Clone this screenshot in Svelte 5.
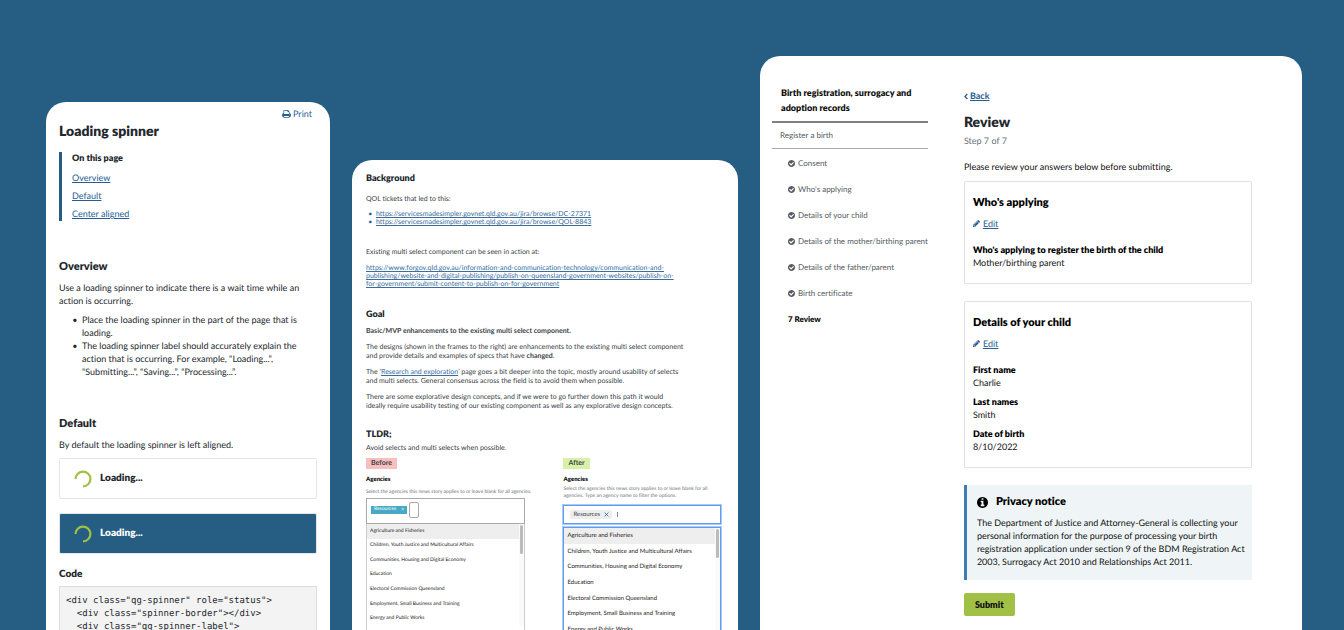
<script>
  const agencies = [
    'Agriculture and Fisheries',
    'Children, Youth Justice and Multicultural Affairs',
    'Communities, Housing and Digital Economy',
    'Education',
    'Electoral Commission Queensland',
    'Employment, Small Business and Training',
    'Energy and Public Works'
  ];

  const steps = [
    'Consent',
    "Who's applying",
    'Details of your child',
    'Details of the mother/birthing parent',
    'Details of the father/parent',
    'Birth certificate'
  ];

  const answers = [
    {
      title: "Who's applying",
      rows: [["Who's applying to register the birth of the child", 'Mother/birthing parent']]
    },
    {
      title: 'Details of your child',
      rows: [
        ['First name', 'Charlie'],
        ['Last names', 'Smith'],
        ['Date of birth', '8/10/2022']
      ]
    }
  ];

  const code = `<div class="qg-spinner" role="status">
  <div class="spinner-border"></div>
  <div class="qg-spinner-label">`;
</script>

{#snippet spinner()}
  <svg class="spinner" viewBox="0 0 18 18" aria-hidden="true">
    <path d="M1.6 9A7.4 7.4 0 1 1 9 16.4" fill="none" stroke="#a1c046" stroke-width="2.2" />
  </svg>
{/snippet}

<div class="page">
  <article class="panel guide">
    <a class="print" href="#print">
      <svg viewBox="0 128 1664 1536" aria-hidden="true"><path d="M384 1536h896v-256h-896v256zM384 896h896v-384h-160q-40 0-68-28t-28-68v-160h-640v640zM1536 960q0-26-19-45t-45-19-45 19-19 45 19 45 45 19 45-19 19-45zM1664 960v416q0 13-9.500 22.500t-22.500 9.500h-224v160q0 40-28 68t-68 28h-960q-40 0-68-28t-28-68v-160h-224q-13 0-22.500-9.500t-9.500-22.500v-416q0-79 56.500-135.500t135.500-56.500h64v-544q0-40 28-68t68-28h672q40 0 88 20t76 48l152 152q28 28 48 76t20 88v256h64q79 0 135.500 56.500t56.500 135.500z" /></svg>
      Print
    </a>
    <h1>Loading spinner</h1>
    <nav class="toc">
      <h2>On this page</h2>
      <a href="#overview">Overview</a>
      <a href="#default">Default</a>
      <a href="#center">Center aligned</a>
    </nav>
    <h2 id="overview">Overview</h2>
    <p>Use a loading spinner to indicate there is a wait time while an action is occurring.</p>
    <ul>
      <li>Place the loading spinner in the part of the page that is loading.</li>
      <li>The loading spinner label should accurately explain the action that is occurring. For example, “Loading...”, “Submitting...”, “Saving...”, “Processing...”.</li>
    </ul>
    <h2 id="default">Default</h2>
    <p>By default the loading spinner is left aligned.</p>
    <div class="demo" role="status">{@render spinner()}Loading...</div>
    <div class="demo dark" role="status">{@render spinner()}Loading...</div>
    <h3>Code</h3>
    <pre>{code}</pre>
  </article>

  <article class="panel brief">
    <h2>Background</h2>
    <p class="intro">QOL tickets that led to this:</p>
    <ul class="tickets">
      <li><a href="#dc">https://servicesmadesimpler.govnet.qld.gov.au/jira/browse/DC-27371</a></li>
      <li><a href="#qol">https://servicesmadesimpler.govnet.qld.gov.au/jira/browse/QOL-8843</a></li>
    </ul>
    <p class="existing">Existing multi select component can be seen in action at:</p>
    <p class="long-link"><a href="#forgov">https://www.forgov.qld.gov.au/information-and-communication-technology/communication-and-publishing/website-and-digital-publishing/publish-on-queensland-government-websites/publish-on-for-government/submit-content-to-publish-on-for-government</a></p>
    <h2 class="goal">Goal</h2>
    <p><strong>Basic/MVP enhancements to the existing multi select component.</strong></p>
    <p>The designs (shown in the frames to the right) are enhancements to the existing multi select component<br />and provide details and examples of specs that have <strong>changed</strong>.</p>
    <p>The ‘<a href="#research">Research and exploration</a>’ page goes a bit deeper into the topic, mostly around usability of selects and multi selects. General consensus across the field is to avoid them when possible.</p>
    <p>There are some explorative design concepts, and if we were to go further down this path it would<br />ideally require usability testing of our existing component as well as any explorative design concepts.</p>
    <h2 class="tldr">TLDR;</h2>
    <p class="avoid">Avoid selects and multi selects when possible.</p>

    <div class="compare">
      <section class="before">
        <span class="badge">Before</span>
        <label for="agency-before">Agencies</label>
        <p class="hint">Select the agencies this news story applies to or leave blank for all agencies.</p>
        <div class="field">
          <span class="chip">Resources <button aria-label="Remove Resources">×</button></span>
          <input id="agency-before" type="text" />
        </div>
        <div class="dropdown">
          <ul>
            {#each agencies as agency, i}
              <li class:active={i === 0}>{agency}</li>
            {/each}
          </ul>
          <div class="track"><div class="thumb"></div></div>
        </div>
      </section>
      <section class="after">
        <span class="badge">After</span>
        <label for="agency-after">Agencies</label>
        <p class="hint">Select the agencies this news story applies to or leave blank for all agencies. Type an agency name to filter the options.</p>
        <div class="field">
          <span class="chip">Resources
            <button aria-label="Remove Resources"><svg viewBox="0 0 8 8"><path d="M1 1l6 6M7 1L1 7" fill="none" stroke="#2d6594" stroke-width="1.300" /></svg></button>
          </span>
          <i class="caret"></i>
          <input id="agency-after" type="text" />
        </div>
        <div class="dropdown">
          <ul>
            {#each agencies as agency, i}
              <li class:active={i === 0}>{agency}</li>
            {/each}
          </ul>
          <div class="track"><div class="thumb"></div></div>
        </div>
      </section>
    </div>
  </article>

  <article class="panel form">
    <nav class="steps">
      <h2>Birth registration, surrogacy and adoption records</h2>
      <a class="group" href="#register">Register a birth</a>
      <ol>
        {#each steps as step}
          <li>
            <svg viewBox="0 128 1536 1536" aria-hidden="true"><path d="M1284 734q0-28-18-46l-91-90q-19-19-45-19t-45 19l-408 407-226-226q-19-19-45-19t-45 19l-91 90q-18 18-18 46 0 27 18 45l362 362q19 19 45 19 27 0 46-19l543-543q18-18 18-45zm252 162q0 209-103 385.500t-279.500 279.500-385.500 103-385.500-103-279.500-279.500-103-385.500 103-385.500 279.500-279.500 385.500-103 385.500 103 279.500 279.500 103 385.500z" /></svg>
            {step}
          </li>
        {/each}
        <li class="current">7 Review</li>
      </ol>
    </nav>
    <main>
      <a class="back" href="#back">
        <svg viewBox="0 0 6 10" aria-hidden="true"><path d="M5 1L1.500 5L5 9" fill="none" stroke="currentColor" stroke-width="2" /></svg><span>Back</span>
      </a>
      <h1>Review</h1>
      <p class="count">Step 7 of 7</p>
      <p class="lead">Please review your answers below before submitting.</p>
      {#each answers as section}
        <section class="card">
          <h2>{section.title}</h2>
          <a class="edit" href="#edit">
            <svg viewBox="0 128 1536 1536" aria-hidden="true"><path d="M363 1536l91-91-235-235-91 91v107h128v128h107zM886 608q0-22-22-22-10 0-17 7l-542 542q-7 7-7 17 0 22 22 22 10 0 17-7l542-542q7-7 7-17zM832 416l416 416-832 832h-416v-416zM1515 512q0 53-37 90l-166 166-416-416 166-165q36-38 90-38 53 0 91 38l235 234q37 39 37 91z" /></svg><span>Edit</span>
          </a>
          <dl>
            {#each section.rows as [term, value]}
              <div><dt>{term}</dt><dd>{value}</dd></div>
            {/each}
          </dl>
        </section>
      {/each}
      <aside>
        <h2>
          <svg viewBox="0 128 1536 1536" aria-hidden="true"><path d="M1024 1376v-160q0-14-9-23t-23-9h-96v-512q0-14-9-23t-23-9h-320q-14 0-23 9t-9 23v160q0 14 9 23t23 9h96v320h-96q-14 0-23 9t-9 23v160q0 14 9 23t23 9h448q14 0 23-9t9-23zm-128-896v-160q0-14-9-23t-23-9h-192q-14 0-23 9t-9 23v160q0 14 9 23t23 9h192q14 0 23-9t9-23zm640 416q0 209-103 385.500t-279.500 279.500-385.500 103-385.500-103-279.500-279.500-103-385.500 103-385.500 279.500-279.500 385.500-103 385.500 103 279.500 279.500 103 385.500z" /></svg>
          Privacy notice
        </h2>
        <p>The Department of Justice and Attorney-General is collecting your personal information for the purpose of processing your birth registration application under section 9 of the BDM Registration Act 2003, Surrogacy Act 2010 and Relationships Act 2011.</p>
      </aside>
      <button class="submit" type="submit">Submit</button>
    </main>
  </article>
</div>

<style>
  :global(body) {
    margin: 0;
    background: #265d83;
  }
  .page {
    display: grid;
    grid-template-columns: 284fr 386fr 542fr;
    gap: 22px;
    height: 100vh;
    padding: 0 42px 0 46px;
    box-sizing: border-box;
    overflow: hidden;
    background: #265d83;
    font-family: Lato, 'Liberation Sans', sans-serif;
    font-size: 9px;
    line-height: 13px;
    color: #23282d;
    font-variant-ligatures: none;
    text-rendering: geometricPrecision;
  }
  .page :where(h1, h2, h3, p, ul, ol, dl, dd, pre) {
    margin: 0;
    padding: 0;
  }
  .page :where(h1, h2, h3) {
    font-weight: 800;
  }
  .steps ol,
  .dropdown ul {
    list-style: none;
  }
  .page :where(a) {
    color: #265d94;
    text-underline-offset: 1px;
  }
  .page svg {
    display: block;
    flex: none;
    fill: currentColor;
  }
  .panel {
    box-sizing: border-box;
    min-width: 0;
    min-height: 100vh;
    border-radius: 20px 20px 0 0;
    background: #fff;
  }

  .guide {
    margin-top: 102px;
    padding: 6px 13px 0;
  }
  .print {
    display: flex;
    align-items: center;
    justify-content: flex-end;
    gap: 2px;
    padding-right: 5px;
    line-height: 12px;
    text-decoration: none;
  }
  .print svg {
    width: 9px;
    height: 8px;
  }
  .guide h1 {
    margin-top: 2px;
    font-size: 14px;
    line-height: 18px;
  }
  .toc {
    display: flex;
    flex-direction: column;
    align-items: flex-start;
    gap: 6px;
    margin-top: 12px;
    padding: 0 0 1px 10px;
    border-left: 3px solid #265d83;
    line-height: 12px;
  }
  .guide .toc h2 {
    margin: 0 0 2px;
    font-size: 9px;
    line-height: 12px;
  }
  .guide h2 {
    margin-top: 37px;
    font-size: 11px;
    line-height: 18px;
  }
  .guide p {
    margin-top: 5px;
  }
  .guide ul {
    margin-top: 6px;
    padding-left: 23px;
    list-style-type: '•  ';
  }
  .demo {
    display: flex;
    align-items: center;
    gap: 8px;
    height: 41px;
    margin-top: 7px;
    padding: 0 14px;
    box-sizing: border-box;
    border: 1px solid #e3e5e7;
    border-radius: 2px;
    font-size: 10px;
    font-weight: 800;
  }
  .demo.dark {
    margin-top: 14px;
    background: #265d83;
    color: #fff;
  }
  .spinner {
    width: 18px;
    height: 18px;
  }
  .guide h3 {
    margin-top: 14px;
    font-size: 10px;
    line-height: 12px;
  }
  .guide pre {
    margin-top: 6px;
    padding: 8px 6px 40px;
    border: 1px solid #dcdcdc;
    background: #f3f3f3;
    font-family: 'DejaVu Sans Mono', monospace;
    font-size: 9px;
  }

  .brief {
    margin-top: 160px;
    padding: 12px 14px 0;
    font-size: 7px;
    line-height: 9px;
    color: #3b4147;
  }
  .brief :where(a) {
    color: #3a6c9d;
  }
  .brief h2 {
    font-size: 9px;
    line-height: 12px;
    color: #23282d;
  }
  .brief > p {
    max-width: 318px;
    margin-top: 7px;
    white-space: nowrap;
  }
  .brief > p:has(a) {
    white-space: normal;
  }
  .brief > .intro {
    margin-top: 11px;
    line-height: 8px;
  }
  .tickets {
    margin-top: 7px;
    padding-left: 10px;
    line-height: 8px;
    color: #265d94;
    list-style-type: '•  ';
  }
  .brief > .existing {
    margin-top: 22px;
    line-height: 8px;
  }
  .brief > .long-link {
    margin-top: 8px;
    line-height: 8px;
  }
  .brief .goal {
    margin-top: 20px;
  }
  .brief .tldr {
    margin-top: 17px;
  }
  .brief > .avoid {
    margin-top: 4px;
  }
  .compare {
    display: grid;
    grid-template-columns: 160fr 158fr;
    gap: 38px;
    margin: 5px 3px 0 0;
    font-size: 6px;
  }
  .compare > section {
    min-width: 0;
  }
  .badge {
    display: block;
    width: fit-content;
    padding: 1px 5px;
    font-size: 7px;
    font-weight: 700;
  }
  .before .badge {
    background: #f7bfbf;
  }
  .after .badge {
    background: #d9f0a8;
  }
  .compare label {
    display: block;
    margin-top: 6px;
    font-weight: 800;
    color: #111;
  }
  .hint {
    font-size: 5px;
    line-height: 7px;
    color: #6b7177;
  }
  .field {
    display: flex;
    align-items: center;
    box-sizing: border-box;
    padding: 0 6px;
    background: #fff;
  }
  .chip {
    display: flex;
    align-items: center;
  }
  .chip button {
    padding: 0;
    border: 0;
    background: none;
    color: inherit;
    font: inherit;
  }
  .field input {
    min-width: 0;
    box-sizing: border-box;
    padding: 0;
    background: none;
    font: inherit;
    outline: 0;
  }
  .dropdown {
    display: flex;
    align-items: flex-start;
  }
  .dropdown ul {
    display: grid;
    flex: 1;
    grid-auto-rows: 1fr;
  }
  .dropdown li {
    display: flex;
    align-items: center;
    padding-left: 3px;
    color: #222;
  }
  .dropdown .active {
    background: #eee;
  }
  .track {
    align-self: stretch;
    width: 5px;
    background: #fafafa;
  }
  .thumb {
    width: 3px;
    height: 29px;
    margin: 1px;
    border-radius: 2px;
    background: #bbb;
  }
  .before .hint {
    padding-top: 5px;
    white-space: nowrap;
  }
  .before .field {
    height: 26px;
    margin-top: 2px;
    padding: 0 4px 3px;
    gap: 2px;
    border: 1px solid #aaa;
  }
  .before .chip {
    gap: 5px;
    height: 8px;
    padding: 0 3px;
    background: #48a9c5;
    color: #fff;
    font-size: 5px;
  }
  .before input {
    width: 10px;
    height: 16px;
    border: 1px solid #aaa;
    border-radius: 2px;
  }
  .before .dropdown {
    padding-bottom: 40px;
    border: 1px solid #ccc;
    border-top: 0;
    font-size: 5px;
  }
  .before .dropdown ul {
    height: 102px;
  }
  .after .hint {
    padding-top: 2px;
  }
  .after .field {
    height: 19px;
    margin-top: 5px;
    border: 1px solid #5f9bee;
    box-shadow: 0 0 0 1px #a9cbf8;
  }
  .after .chip {
    gap: 4px;
    height: 9px;
    padding: 0 3px;
    border-radius: 2px;
    background: #eee;
  }
  .after .chip svg {
    width: 5px;
    height: 5px;
  }
  .caret {
    width: 1px;
    height: 5px;
    margin-left: 5px;
    background: #888;
  }
  .after input {
    flex: 1;
    border: 0;
  }
  .after .dropdown {
    margin-top: 3px;
    padding-bottom: 40px;
    border: 1px solid #5f9bee;
    box-shadow: 0 0 0 1px #a9cbf8;
  }
  .after .dropdown ul {
    height: 109px;
  }

  .form {
    display: grid;
    grid-template-columns: 155fr 288fr;
    align-items: start;
    gap: 36px;
    margin-top: 56px;
    padding: 0 50px 0 12px;
  }
  .steps {
    font-size: 8px;
    color: #555b61;
  }
  .steps h2 {
    padding: 29px 8px 6px 9px;
    border-bottom: 2px solid #7d8184;
    font-size: 9px;
    line-height: 15px;
    color: #111;
  }
  .group {
    display: block;
    padding: 6px 8px;
    border-bottom: 1px solid #aaa;
    color: #555b61;
    text-decoration: none;
  }
  .steps ol {
    padding: 1px 0 0 16px;
  }
  .steps li {
    display: flex;
    align-items: center;
    gap: 3px;
    height: 26px;
    white-space: nowrap;
  }
  .steps li svg {
    width: 7px;
    height: 7px;
  }
  .steps .current {
    font-weight: 800;
    color: #111;
  }
  .form main {
    padding-top: 34px;
    color: #111;
  }
  .back,
  .edit {
    display: flex;
    align-items: center;
    width: fit-content;
    text-decoration: none;
  }
  .back span,
  .edit span {
    text-decoration: underline;
  }
  .back {
    gap: 2px;
    line-height: 12px;
    font-weight: 700;
  }
  .back svg {
    width: 4px;
    height: 7px;
  }
  .form h1 {
    margin-top: 11px;
    font-size: 14px;
    line-height: 18px;
    color: #23282d;
  }
  .form .count {
    margin-top: 3px;
    color: #6b7177;
  }
  .form .lead {
    margin-top: 13px;
  }
  .card {
    margin-top: 17px;
    padding: 14px 8px;
    border: 1px solid #e0e2e4;
    border-radius: 2px;
  }
  .lead + .card {
    margin-top: 8px;
  }
  .card h2,
  aside h2 {
    font-size: 11px;
    line-height: 14px;
    color: #000;
  }
  .edit {
    gap: 3px;
    margin-top: 7px;
  }
  .edit svg {
    width: 7px;
    height: 7px;
  }
  .card dl {
    display: grid;
    gap: 6px;
    margin-top: 13px;
  }
  dt {
    font-weight: 800;
    color: #000;
  }
  aside {
    margin-top: 17px;
    padding: 10px 6px 12px 10px;
    border-left: 3px solid #3e7cb1;
    background: #eff5f6;
  }
  aside h2 {
    display: flex;
    align-items: center;
    gap: 8px;
  }
  aside svg {
    width: 11px;
    height: 11px;
  }
  .form aside p {
    margin-top: 7px;
  }
  .submit {
    height: 23px;
    margin-top: 13px;
    padding: 0 11px;
    border: 0;
    border-radius: 2px;
    background: #a1c046;
    font-family: inherit;
    font-size: 9px;
    font-weight: 800;
    color: #111;
  }
</style>
